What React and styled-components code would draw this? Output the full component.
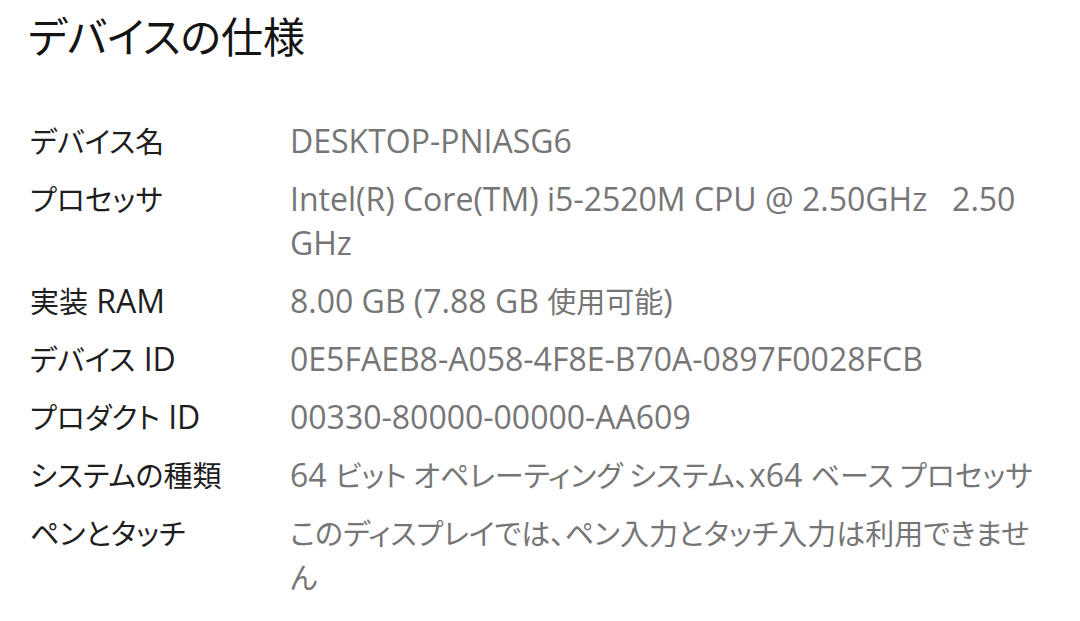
import React from "react";
import styled, { createGlobalStyle } from "styled-components";

const GlobalStyle = createGlobalStyle`
  html, body {
    margin: 0;
    padding: 0;
    background: #ffffff;
  }
  body {
    font-family: "Open Sans", "Noto Sans CJK JP", sans-serif;
    font-feature-settings: "palt" 1;
  }
`;

const Page = styled.div`
  width: 1080px;
  height: 621px;
  overflow: hidden;
  background: #ffffff;
  padding: 3px 0 0 28px;
  box-sizing: border-box;
`;

const Title = styled.h1`
  margin: 0 0 52px;
  font-family: "Noto Sans CJK JP", sans-serif;
  font-size: 42px;
  font-weight: 400;
  line-height: 64px;
  color: #141414;
`;

const SpecList = styled.dl`
  margin: 0;
  display: grid;
  grid-template-columns: 260px 745px;
  row-gap: 14px;
  padding-left: 2px;
`;

const Label = styled.dt`
  margin: 0;
  font-size: 32px;
  line-height: 44px;
  color: #1e1e1e;
`;

const Value = styled.dd`
  margin: 0;
  font-size: 32px;
  line-height: 44px;
  color: #767676;
`;

// 日本語部分は Meiryo UI に近い幅にするため少し小さく
const Jp = styled.span`
  font-family: "Noto Sans CJK JP", sans-serif;
  font-size: 29px;
  line-height: 1;
`;

const mixed = (text) =>
  text
    .split(/([\u3000-\u30ff\u4e00-\u9fff、]+(?:[ \u3000-\u30ff\u4e00-\u9fff、]*[\u3000-\u30ff\u4e00-\u9fff、])?)/)
    .filter(Boolean)
    .map((part, i) =>
      /[\u3000-\u30ff\u4e00-\u9fff]/.test(part) ? <Jp key={i}>{part}</Jp> : part
    );

const specs = [
  ["デバイス名", "DESKTOP-PNIASG6"],
  ["プロセッサ", "Intel(R) Core(TM) i5-2520M CPU @ 2.50GHz\u00a0\u00a0 2.50 GHz"],
  ["実装 RAM", "8.00 GB (7.88 GB 使用可能)"],
  ["デバイス ID", "0E5FAEB8-A058-4F8E-B70A-0897F0028FCB"],
  ["プロダクト ID", "00330-80000-00000-AA609"],
  ["システムの種類", "64 ビット オペレーティング システム、x64 ベース プロセッサ"],
  ["ペンとタッチ", "このディスプレイでは、ペン入力とタッチ入力は利用できません"],
];

export default function App() {
  return (
    <>
      <GlobalStyle />
      <Page>
        <Title>デバイスの仕様</Title>
        <SpecList>
          {specs.map(([label, value]) => (
            <React.Fragment key={label}>
              <Label>{mixed(label)}</Label>
              <Value>{mixed(value)}</Value>
            </React.Fragment>
          ))}
        </SpecList>
      </Page>
    </>
  );
}
